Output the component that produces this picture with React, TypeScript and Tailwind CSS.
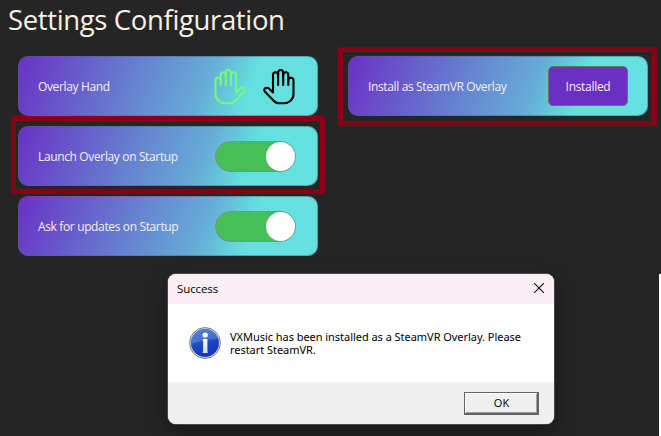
import React from "react";

const CARD =
  "relative flex h-[60px] w-[300px] items-center rounded-[10px] border border-[#52618a]/50 bg-[linear-gradient(111deg,#6a30c5_0%,#6680d0_38%,#66acd7_61%,#64e0df_76%)] bg-origin-border pl-[19px] text-[12px] text-[#f5efe6]";

const LABEL = "pt-[2px] tracking-[-0.36px]";

function Hand({ color, flip }: { color: string; flip?: boolean }) {
  return (
    <svg
      width="32"
      height="38"
      viewBox="0 0 32 38"
      fill="none"
      stroke={color}
      strokeWidth="2.1"
      strokeLinejoin="round"
      strokeLinecap="round"
      className={flip ? "-scale-x-100" : ""}
    >
      <path d="M1.5 12.5V26C1.5 31.5 6 35.3 11.5 35.3H15.5C18.5 35.3 20.5 34 22.5 31.5L30 23.7C31.2 22.2 30.7 20.5 29.3 20C27.8 19.5 26.8 19.8 25.5 21L22 24.5V7C22 3.4 16.9 3.4 16.9 7V4.6C16.9 1.2 11.8 1.2 11.8 4.6V7C11.8 3.4 6.7 3.4 6.7 7V12.5C6.7 8.8 1.5 8.8 1.5 12.5" />
      <path d="M6.7 10V17M11.8 5V17M16.9 5V17" />
    </svg>
  );
}

function Toggle() {
  return (
    <div className="absolute top-[14px] left-[196px] flex h-[31px] w-[81px] justify-end rounded-full border border-[#808c8e] bg-[#47bf58]">
      <div className="h-[29px] w-[29px] rounded-full bg-white" />
    </div>
  );
}

function InfoIcon() {
  return (
    <svg width="32" height="32" viewBox="0 0 32 32">
      <defs>
        <linearGradient id="ball" x1="0" y1="0" x2="0.4" y2="1">
          <stop offset="0" stopColor="#3f6fd4" />
          <stop offset="0.5" stopColor="#2450bd" />
          <stop offset="1" stopColor="#1035c8" />
        </linearGradient>
        <linearGradient id="letter" x1="0" y1="0" x2="0" y2="1">
          <stop offset="0" stopColor="#ffffff" />
          <stop offset="1" stopColor="#d6d6d6" />
        </linearGradient>
      </defs>
      <circle cx="16" cy="16" r="15.4" fill="#e8e8e8" stroke="#77797c" strokeWidth="1" />
      <circle cx="16" cy="16" r="13.8" fill="url(#ball)" stroke="#24408c" strokeWidth="0.6" />
      <path d="M2.5 17A13.5 13.5 0 0 1 29 12Q17 12 2.5 17Z" fill="#6f98e4" fillOpacity="0.45" />
      <circle cx="16.2" cy="8.1" r="2.6" fill="#fff" />
      <path d="M13.7 12H18.4V24.5H18.8V26H13.7V24.8H14.1V13.5H13.7Z" fill="url(#letter)" />
    </svg>
  );
}

export default function App() {
  return (
    <div className="relative h-[436px] w-[661px] overflow-hidden bg-[#252525] font-['Open_Sans','Noto_Sans',sans-serif]">
      <h1 className="h-[56px] pl-[8px] text-[27.5px] leading-[39px] font-normal tracking-[-0.36px] whitespace-nowrap text-[#faf0e4]">
        Settings Configuration
      </h1>
      <main className="flex gap-[30px] pl-[18px]">
        <section className="flex flex-col gap-[10px]">
          <div className={CARD}>
            <span className={LABEL}>Overlay Hand</span>
            <div className="absolute top-[11px] left-[195px] flex gap-[17px]">
              <Hand color="#75f97c" />
              <Hand color="#000000" flip />
            </div>
          </div>
          <div className={CARD}>
            <span className={LABEL}>Launch Overlay on Startup</span>
            <Toggle />
            <div className="pointer-events-none absolute -top-[11px] -left-[8px] h-[78px] w-[314px] border-[5px] border-[#880015]" />
          </div>
          <div className={CARD}>
            <span className={LABEL}>Ask for updates on Startup</span>
            <Toggle />
          </div>
        </section>
        <section>
          <div className={CARD}>
            <span className={LABEL}>Install as SteamVR Overlay</span>
            <button className="absolute top-[9px] left-[199px] h-[40px] w-[80px] rounded-[5px] border border-[#707070] bg-[#6a2fc3] pt-[2px] tracking-[-0.3px]">
              Installed
            </button>
            <div className="pointer-events-none absolute -top-[10px] -left-[11px] h-[79px] w-[319px] border-[5px] border-[#880015]" />
          </div>
        </section>
      </main>

      <div className="absolute top-[274px] left-[659px] h-[162px] w-[2px] bg-white" />

      <div className="absolute top-[274px] left-[168px] flex h-[150px] w-[386px] flex-col overflow-hidden rounded-[8px] bg-white text-[11.5px] text-black shadow-[0_0_0_1px_#484848,0_8px_22px_rgba(0,0,0,0.4)]">
        <header className="flex h-[30px] shrink-0 items-center justify-between bg-[#f9eef3] pr-[10px] pl-[9px]">
          <span className="tracking-[-0.1px]">Success</span>
          <svg width="10" height="10" viewBox="0 0 10 10" stroke="#111" strokeWidth="1.1" className="-mt-[3px]">
            <path d="M0 0L10 10M10 0L0 10" />
          </svg>
        </header>
        <div className="flex h-[78px] shrink-0 pt-[23px] pl-[21px]">
          <InfoIcon />
          <p className="ml-[9px] w-[310px] pt-[3px] font-['Noto_Sans','Open_Sans',sans-serif] text-[11px] leading-[13px] tracking-[-0.04px]">
            VXMusic has been installed as a SteamVR Overlay. Please restart SteamVR.
          </p>
        </div>
        <footer className="flex flex-1 justify-end bg-[#f0f0f0] pt-[10px] pr-[15px]">
          <button className="h-[23px] w-[75px] border border-[#646464] text-[11px] shadow-[inset_-1px_-1px_0_#646464,inset_1px_1px_0_#fff,inset_-2px_-2px_0_#a0a0a0]">
            OK
          </button>
        </footer>
      </div>
    </div>
  );
}
